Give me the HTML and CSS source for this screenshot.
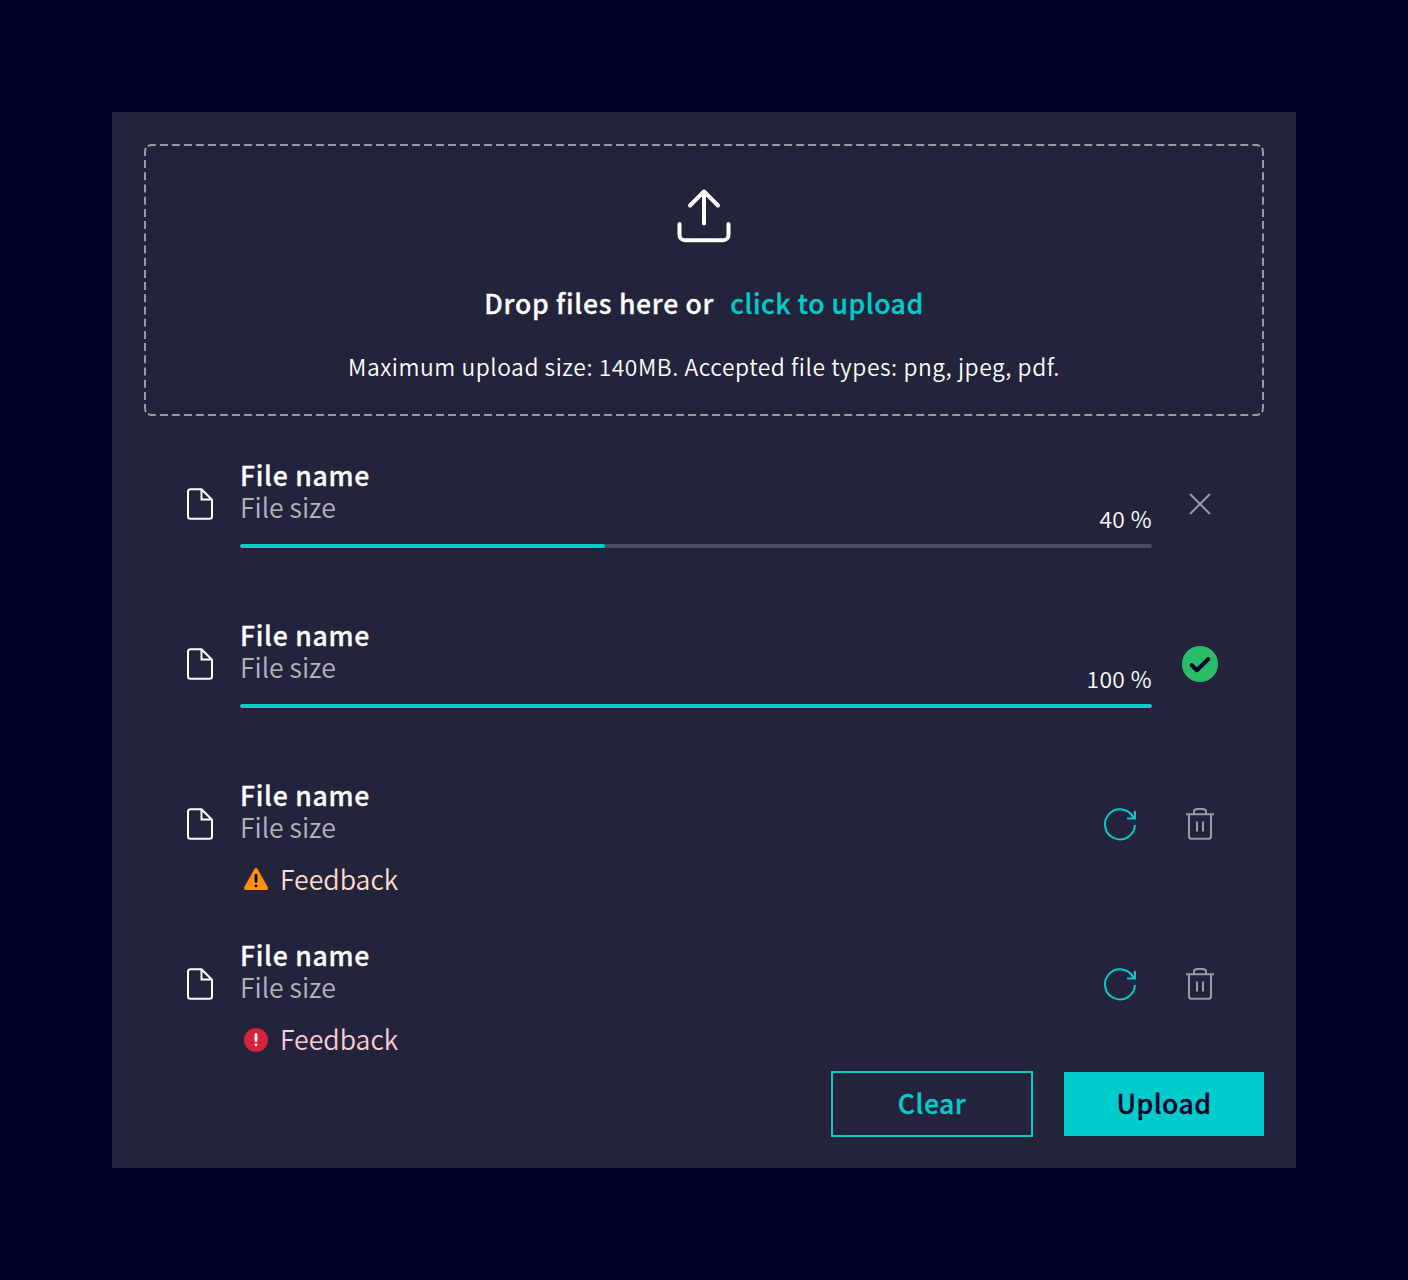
FILE: index.html
```
<!DOCTYPE html>
<html lang="en">
<head>
<meta charset="utf-8">
<title>File upload</title>
<link rel="stylesheet" href="styles.css">
</head>
<body>
<svg width="0" height="0" class="sprite" aria-hidden="true">
  <symbol id="file" viewBox="0 0 32 32"><path d="M17.500 1.200H6.500A2.500 2.500 0 0 0 4 3.700v24.600A2.500 2.500 0 0 0 6.500 30.800h19A2.500 2.500 0 0 0 28 28.300V11.700ZM17.500 1.200V11.500H28"/></symbol>
  <symbol id="retry" viewBox="0 0 32 32" overflow="visible"><path d="M31 17A15 15 0 1 1 29.500 9.800M31 3v7.500h-8"/></symbol>
  <symbol id="trash" viewBox="0 0 32 32" overflow="visible"><path d="M2 6.300h28M10 6V4a3 3 0 0 1 3-3h6a3 3 0 0 1 3 3v2M5 6.500V28.200A2.500 2.500 0 0 0 7.500 30.700h17A2.500 2.500 0 0 0 27 28.200V6.500M13 13.500V23.500M19 13.500V23.500"/></symbol>
</svg>
<main class="panel">
  <section class="dropzone">
    <svg class="outline" width="1120" height="272" viewBox="0 0 1120 272">
      <path d="M4 2Q6 1 8 1H1112Q1114 1 1116 2M4 270Q6 271 8 271H1112Q1114 271 1116 270" stroke-dasharray="8 4.005"/>
      <path d="M2 4Q1 6 1 8V264Q1 266 2 268M1118 4Q1119 6 1119 8V264Q1119 266 1118 268" stroke-dasharray="8 4.200"/>
    </svg>
    <svg class="upload-icon" width="64" height="64" viewBox="0 0 64 64"><path d="M7.500 40V51a5.200 5.200 0 0 0 5.200 5.200H51.300A5.200 5.200 0 0 0 56.500 51V40M32 39.500V8M18 21.500L32 7.500L46 21.500"/></svg>
    <p class="prompt"><span class="drop">Drop files here or</span><a class="link">click to upload</a></p>
    <p class="hint">Maximum upload size: 140MB. Accepted file types: png, jpeg, pdf.</p>
  </section>
  <ul class="files">
    <li class="file">
      <svg class="icon"><use href="#file"/></svg>
      <div class="body">
        <div class="summary">
          <div class="label"><div class="name">File name</div><div class="size">File size</div></div>
          <div class="percent">40 %</div>
        </div>
        <div class="track"><div class="bar" style="width:40%"></div></div>
      </div>
      <svg class="icon muted" viewBox="0 0 32 32"><path d="M6 6L26 26M26 6L6 26"/></svg>
    </li>
    <li class="file">
      <svg class="icon"><use href="#file"/></svg>
      <div class="body">
        <div class="summary">
          <div class="label"><div class="name">File name</div><div class="size">File size</div></div>
          <div class="percent">100 %</div>
        </div>
        <div class="track"><div class="bar" style="width:100%"></div></div>
      </div>
      <svg class="icon success" viewBox="0 0 32 32"><circle cx="16" cy="16" r="18"/><path d="M7.700 17.200L12.900 22.200L24.300 11"/></svg>
    </li>
    <li class="file">
      <svg class="icon"><use href="#file"/></svg>
      <div class="body">
        <div class="label"><div class="name">File name</div><div class="size">File size</div></div>
        <div class="feedback warning">
          <svg width="32" height="32" viewBox="0 0 32 32"><path class="shape" d="M16 5.800L26.200 24.200H5.800Z"/><path class="mark" d="M16 11.200V17.500M16 21.800V21.900"/></svg>
          <span>Feedback</span>
        </div>
      </div>
      <svg class="icon accent"><use href="#retry"/></svg>
      <svg class="icon muted"><use href="#trash"/></svg>
    </li>
    <li class="file">
      <svg class="icon"><use href="#file"/></svg>
      <div class="body">
        <div class="label"><div class="name">File name</div><div class="size">File size</div></div>
        <div class="feedback error">
          <svg width="32" height="32" viewBox="0 0 32 32"><circle class="shape" cx="16" cy="16" r="12"/><path class="mark" d="M16 10.500V16.500M16 20.900V21"/></svg>
          <span>Feedback</span>
        </div>
      </div>
      <svg class="icon accent"><use href="#retry"/></svg>
      <svg class="icon muted"><use href="#trash"/></svg>
    </li>
  </ul>
  <div class="actions">
    <button class="button secondary">Clear</button>
    <button class="button primary">Upload</button>
  </div>
</main>
</body>
</html>
```
FILE: styles.css
```
* { box-sizing: border-box; }
body {
  margin: 0;
  padding: 112px;
  background: #000028;
  color: #fff;
  font-family: "Noto Sans CJK SC", "Noto Sans", sans-serif;
  font-size: 26.6px;
  line-height: 29px;
}
p, ul { margin: 0; padding: 0; }
ul { list-style: none; }
svg { fill: none; stroke: currentColor; stroke-width: 2; flex: none; }
.sprite { display: none; }
.panel {
  width: 1184px;
  height: 1056px;
  padding: 32px;
  background: #23233c;
}
.dropzone {
  position: relative;
  display: flex;
  flex-direction: column;
  align-items: center;
  height: 272px;
  padding-top: 40px;
}
.outline { position: absolute; inset: 0; color: #9999a9; }
.upload-icon { stroke-width: 4; stroke-linecap: round; stroke-linejoin: round; }
.prompt { display: flex; gap: 16px; height: 32px; margin-top: 40px; }
.prompt, .name, .button { font-weight: 500; letter-spacing: 0.7px; -webkit-text-stroke: 0.3px currentColor; }
.link { color: #00cccc; letter-spacing: 0.5px; }
.hint { height: 32px; margin-top: 32px; font-size: 22.8px; letter-spacing: 0.55px; white-space: nowrap; font-weight: 350; }
.files { padding-top: 16px; }
.file { display: flex; height: 160px; padding: 28px 48px 0 40px; }
.icon { width: 32px; height: 32px; margin-top: 28px; overflow: visible; }
.icon + .icon { margin-left: 48px; }
.body { flex: 1; margin-left: 24px; margin-right: 32px; }
.body:has(+ .accent) { margin-right: 0; }
.muted { color: #9999a9; }
.accent { color: #00cccc; }
.summary { display: flex; justify-content: space-between; align-items: flex-end; height: 76px; }
.label { height: 64px; align-self: flex-start; }
.name, .size { height: 32px; }
.size { color: #b3b3be; font-weight: 350; }
.percent { height: 32px; font-size: 22.8px; letter-spacing: 0.4px; font-weight: 350; }
.track { height: 4px; margin-top: 8px; border-radius: 2px; background: #4c4c68; overflow: hidden; }
.bar { height: 4px; border-radius: 2px; background: #00cccc; }
.success circle { fill: #28bf66; stroke: none; }
.success path { stroke: #000028; stroke-width: 4; stroke-linecap: round; stroke-linejoin: round; }
.feedback { display: flex; gap: 8px; margin-top: 20px; font-weight: 350; }
.feedback .mark { stroke-width: 2.800; stroke-linecap: round; }
.warning { color: #ffddcb; }
.warning .shape { fill: #ff9000; stroke: #ff9000; stroke-width: 3.600; stroke-linejoin: round; }
.warning .mark { stroke: #000028; }
.error { color: #fcccd7; }
.error .shape { fill: #d72339; stroke: none; }
.error .mark { stroke: #fff; }
.actions { display: flex; justify-content: flex-end; gap: 31px; margin-top: -1px; }
.button { font-family: inherit; font-size: inherit; line-height: 29px; letter-spacing: 0.5px; border: 0; border-radius: 0; padding: 0 0 3px; }
.secondary { width: 202px; height: 66px; border: 2px solid #00cccc; background: none; color: #00cccc; }
.primary { width: 200px; height: 64px; margin-top: 1px; background: #00cccc; color: #000028; }
```
